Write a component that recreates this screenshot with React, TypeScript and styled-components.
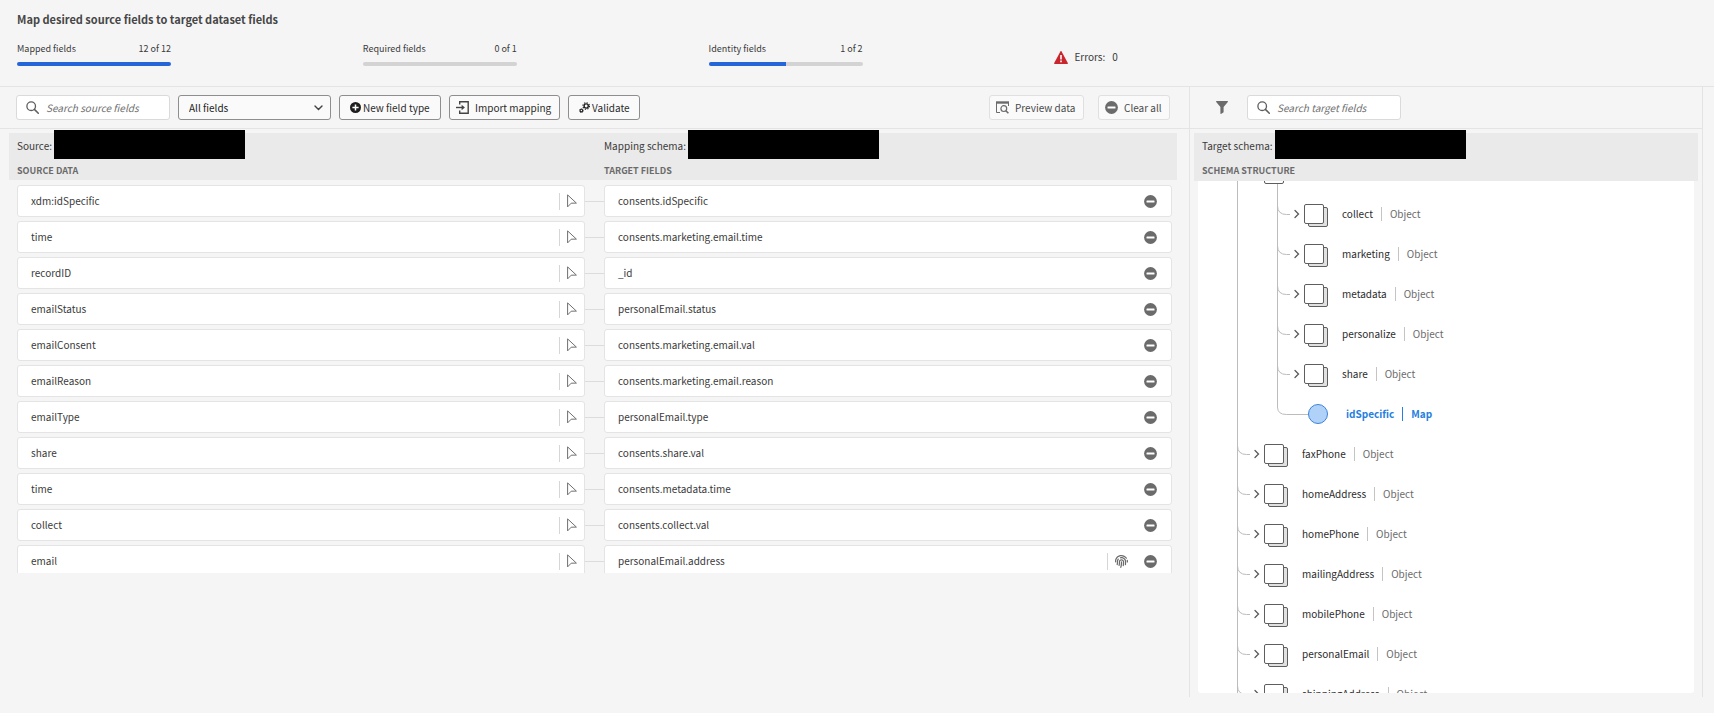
import React, { useLayoutEffect, useRef } from 'react';
import styled, { createGlobalStyle, css } from 'styled-components';
import { FaFingerprint } from 'react-icons/fa';

const GlobalStyle = createGlobalStyle`
  *, *::before, *::after { box-sizing: border-box; }
  body {
    margin: 0;
    background: #f5f5f5;
    color: #3a3a3a;
    font-family: "Noto Sans CJK SC", "Open Sans", sans-serif;
    font-size: 10px;
    line-height: 16px;
  }
  button, input, select { font: inherit; color: inherit; }
  ul { list-style: none; margin: 0; padding: 0; }
`;

const Page = styled.div`
  display: flex;
  flex-direction: column;
  height: 100vh;
  padding-bottom: 16px;
`;

const Header = styled.header`
  padding: 10px 0 20px 17px;
  border-bottom: 1px solid #e4e4e4;
`;

const Title = styled.h1`
  margin: 0;
  font-size: 11px;
  line-height: 18px;
  font-weight: 700;
  color: #464646;
`;

const Stats = styled.div`
  display: grid;
  grid-template-columns: repeat(5, 1fr);
  column-gap: 32px;
  margin-top: 12px;
`;

const Stat = styled.div`
  width: 154px;
`;

const StatLabels = styled.div`
  display: flex;
  justify-content: space-between;
  font-size: 9px;
  line-height: 18px;
  margin-bottom: 4px;
`;

const Track = styled.div`
  height: 4px;
  border-radius: 2px;
  background: #d3d3d3;
  overflow: hidden;
`;

const Fill = styled.div`
  height: 100%;
  background: #2466d8;
`;

const Errors = styled.div`
  display: flex;
  align-items: center;
  gap: 6px;
  padding-top: 8px;
`;

const ErrorCount = styled.span`
  margin-left: 1px;
`;

const Workspace = styled.main`
  flex: 1;
  min-height: 0;
  display: grid;
  grid-template-columns: minmax(0, 1189fr) minmax(0, 514fr) 11px;
`;

const Pane = styled.section<{ $divided?: boolean }>`
  display: flex;
  flex-direction: column;
  min-height: 0;
  ${p => p.$divided && css`
    border-left: 1px solid #e4e4e4;
    border-right: 1px solid #e4e4e4;
  `}
`;

const Toolbar = styled.div<{ $inset: number }>`
  display: flex;
  align-items: center;
  gap: 8px;
  padding: 8px 19px 8px ${p => p.$inset}px;
  border-bottom: 1px solid #e4e4e4;
`;

const Spacer = styled.div`
  flex: 1;
`;

const SearchField = styled.label`
  display: flex;
  align-items: center;
  gap: 7px;
  width: 154px;
  height: 25px;
  padding: 0 9px;
  background: #fff;
  border: 1px solid #dadada;
  border-radius: 3px;
`;

const SearchInput = styled.input`
  width: 100%;
  min-width: 0;
  padding: 0;
  border: 0;
  outline: 0;
  background: none;
  &::placeholder { color: #6f6f6f; font-style: italic; opacity: 1; }
`;

const SelectBox = styled.div`
  display: grid;
  align-items: center;
  width: 153px;
  height: 25px;
  > * { grid-area: 1 / 1; }
  > svg { justify-self: end; margin-right: 8px; pointer-events: none; }
`;

const Select = styled.select`
  appearance: none;
  width: 100%;
  height: 25px;
  padding: 0 24px 0 10px;
  color: #222;
  background: #fafafa;
  border: 1px solid #8e8e8e;
  border-radius: 3px;
`;

const Button = styled.button<{ $quiet?: boolean; $compact?: boolean; $width: number }>`
  display: flex;
  align-items: center;
  gap: ${p => (p.$compact ? 2 : 6)}px;
  min-width: ${p => p.$width}px;
  height: 25px;
  padding: 0 6px 0 ${p => (p.$compact ? 10 : 6)}px;
  white-space: nowrap;
  color: ${p => (p.$quiet ? '#4b4b4b' : '#2c2c2c')};
  background: #fafafa;
  border: 1px solid ${p => (p.$quiet ? '#e0e0e0' : '#8e8e8e')};
  border-radius: 3px;
`;

const ButtonPair = styled.div`
  display: flex;
  gap: 14px;
`;

const IconButton = styled.button`
  display: flex;
  align-items: center;
  justify-content: center;
  flex: none;
  padding: 0;
  border: 0;
  background: none;
`;

const FilterButton = styled(IconButton)`
  width: 12px;
  margin-right: 11px;
`;

const Band = styled.div<{ $wide?: boolean }>`
  display: grid;
  grid-template-columns: ${p => (p.$wide ? '1fr 1fr' : '1fr')};
  column-gap: 19px;
  margin: 4px ${p => (p.$wide ? 12 : 4)}px 0 ${p => (p.$wide ? 9 : 4)}px;
  height: ${p => (p.$wide ? 47 : 48)}px;
  padding: 0 5px 0 8px;
  background: #eaeaea;
`;

const SchemaLine = styled.div`
  display: flex;
  align-items: center;
  gap: 2px;
  height: 26px;
  white-space: nowrap;
`;

const Redacted = styled.span`
  width: 191px;
  height: 29px;
  margin-top: -3px;
  background: #000;
`;

const BandTitle = styled.h2`
  margin: 4px 0 0;
  font-size: 9px;
  line-height: 16px;
  font-weight: 700;
  color: #6b6b6b;
  text-transform: uppercase;
`;

const MappingList = styled.ul`
  height: calc(100vh - 320px);
  padding: 5px 17px 0;
  overflow: hidden;
`;

const MappingRow = styled.li`
  display: grid;
  grid-template-columns: minmax(0, 1fr) 19px minmax(0, 1fr);
  align-items: center;
  margin-bottom: 4px;
`;

const FieldCard = styled.div<{ $target?: boolean }>`
  display: flex;
  align-items: center;
  height: 32px;
  padding: 0 ${p => (p.$target ? 14 : 7)}px 0 13px;
  background: #fff;
  border: 1px solid #e4e4e4;
  border-radius: 3px;
`;

const FieldName = styled.span`
  flex: 1;
`;

const CardDivider = styled.span`
  width: 1px;
  height: 17px;
  margin-right: 7px;
  background: #d6d6d6;
`;

const Identity = styled.span`
  display: flex;
  align-items: center;
  margin-right: 16px;
  color: #6b6b6b;
`;

const Connector = styled.span`
  height: 1px;
  background: #dcdcdc;
`;

const TreePanel = styled.div`
  flex: 1;
  min-height: 0;
  margin: 0 8px 4px;
  background: #fff;
  border-radius: 0 0 3px 3px;
  overflow-y: auto;
  scrollbar-width: none;
`;

const TreeRow = styled.li`
  display: flex;
  align-items: center;
  height: 40px;
  padding-left: 39px;
  > svg { flex: none; }
`;

const NodeName = styled.span<{ $selected?: boolean }>`
  margin-left: ${p => (p.$selected ? 18 : 14)}px;
  font-weight: ${p => (p.$selected ? 700 : 400)};
  color: ${p => (p.$selected ? '#2680e0' : '#2c2c2c')};
`;

const NodeType = styled.span<{ $selected?: boolean }>`
  margin-left: 8px;
  padding-left: 8px;
  line-height: 14px;
  border-left: 1px solid ${p => (p.$selected ? '#2680e0' : '#c4c4c4')};
  font-weight: ${p => (p.$selected ? 700 : 400)};
  color: ${p => (p.$selected ? '#2680e0' : '#6b6b6b')};
`;

const GlassSvg = styled.svg`
  flex: none;
`;

const SearchIcon = () => (
  <GlassSvg width="13" height="13" viewBox="0 0 13 13" fill="none" stroke="#5e5e5e" strokeWidth="1.3">
    <circle cx="5.2" cy="5.2" r="4.3" />
    <path d="M8.4 8.4 12.3 12.3" strokeLinecap="round" strokeWidth="1.5" />
  </GlassSvg>
);

const ChevronDown = () => (
  <svg width="9" height="6" viewBox="0 0 9 6" fill="none" stroke="#444" strokeWidth="1.4" strokeLinecap="round">
    <path d="M1 1 4.5 4.6 8 1" />
  </svg>
);

const PlusCircle = () => (
  <svg width="11" height="11" viewBox="0 0 11 11">
    <circle cx="5.5" cy="5.5" r="5.5" fill="#1e1e1e" />
    <path d="M5.5 2.4v6.2M2.4 5.5h6.2" stroke="#fff" strokeWidth="1.5" />
  </svg>
);

const ImportIcon = () => (
  <svg width="13" height="13" viewBox="0 0 13 13" fill="none" stroke="#444" strokeWidth="1.4">
    <path d="M3.7 3.6V.8h8.5v11.4H3.7V9.4" />
    <path d="M0 6.5h7" />
    <path d="M5.6 3.7 8.9 6.5 5.6 9.3Z" fill="#444" stroke="none" />
  </svg>
);

const GearsIcon = () => (
  <svg width="11" height="11" viewBox="0 0 11 11" fill="none" stroke="#222">
    <circle cx="7.2" cy="4" r="2.1" strokeWidth="1.4" />
    <circle cx="7.2" cy="4" r="3.3" strokeWidth="1.1" strokeDasharray="1.3 1.29" />
    <circle cx="2.4" cy="8.6" r="1.3" strokeWidth="1.1" />
    <circle cx="2.4" cy="8.6" r="2" strokeWidth=".7" strokeDasharray=".9 .67" />
  </svg>
);

const PreviewIcon = () => (
  <svg width="13" height="13" viewBox="0 0 13 13" fill="none" stroke="#6b6b6b">
    <path d="M.5 1v10.500H4M12.500 1v4" />
    <path d="M0 1.5h13" strokeWidth="2.4" />
    <circle cx="7.8" cy="7.6" r="2.9" strokeWidth="1.2" />
    <path d="M9.9 9.8 12.4 12.3" strokeWidth="1.6" />
  </svg>
);

const MinusCircle = () => (
  <svg width="13" height="13" viewBox="0 0 13 13">
    <circle cx="6.5" cy="6.5" r="6.4" fill="#6b6b6b" />
    <rect x="2.5" y="5.5" width="8" height="2" rx=".5" fill="#fff" />
  </svg>
);

const FilterIcon = () => (
  <svg width="12" height="13" viewBox="0 0 12 13">
    <path d="M.4 0h11.2q.6.4.2 1L7.6 6v5.2L5 12.9q-.5.1-.6-.4V6L.2 1Q-.1.3.4 0Z" fill="#6b6b6b" />
  </svg>
);

const PointerIcon = () => (
  <svg width="10" height="14" viewBox="0 0 10 14" fill="none" stroke="#6f6f6f" strokeLinejoin="round">
    <path d="M.6.9v12L4.2 9.2l5.2-.1Z" />
  </svg>
);

const AlertIcon = () => (
  <svg width="14" height="13" viewBox="0 0 14 13">
    <path d="M6.4.5q.6-1 1.2 0l6.2 11.6q.4.9-.5.9H.7q-.9 0-.5-.9Z" fill="#c9252d" />
    <path d="M7 4v4.4M7 9.6v1.6" stroke="#fff" strokeWidth="1.6" />
  </svg>
);

const Trunk = () => (
  <svg width="40" height="40" viewBox="0 0 40 40" fill="none">
    <path d="M.5 0v40" stroke="#bcbcbc" />
  </svg>
);

/* Branch line with its elbow; the last child of a group ends at the elbow. */
const Branch = ({ last }: { last?: boolean }) =>
  last ? (
    <svg width="31" height="40" viewBox="0 0 31 40" fill="none" stroke="#bcbcbc">
      <path d="M.5 0v13q0 7.500 9 7.500H31" />
    </svg>
  ) : (
    <svg width="13" height="40" viewBox="0 0 13 40" fill="none" stroke="#bcbcbc">
      <path d="M.5 0v40" />
      <path d="M.5 11.500q0 9 9 9H13" />
    </svg>
  );

const Caret = ({ open }: { open?: boolean }) => (
  <svg width="14" height="10" viewBox="0 0 14 10" fill="none" stroke="#5a5a5a" strokeWidth="1.3" strokeLinecap="round">
    <path d={open ? 'M3 3.500 6.500 7 10 3.500' : 'M5 1.500 8.500 5 5 8.500'} />
  </svg>
);

const ObjectIcon = ({ open }: { open?: boolean }) => (
  <svg width="24" height="40" viewBox="0 0 24 40" stroke="#5e5e5e">
    {!open && <rect x="4.500" y="13.500" width="19" height="19" rx="1.500" fill="#e1e1e1" />}
    <rect x=".5" y="10.500" width="19" height="19" rx="1.500" fill="#fff" />
    {open && <path d="M13.500 30v10" stroke="#bcbcbc" />}
  </svg>
);

const MapIcon = () => (
  <svg width="20" height="20" viewBox="0 0 20 20">
    <circle cx="10" cy="10" r="9.500" fill="#b1d2f8" stroke="#3b83d8" />
  </svg>
);

const stats = [
  { label: 'Mapped fields', value: 12, total: 12 },
  { label: 'Required fields', value: 0, total: 1 },
  { label: 'Identity fields', value: 1, total: 2 },
];

const mappings = [
  { source: 'xdm:idSpecific', target: 'consents.idSpecific' },
  { source: 'time', target: 'consents.marketing.email.time' },
  { source: 'recordID', target: '_id' },
  { source: 'emailStatus', target: 'personalEmail.status' },
  { source: 'emailConsent', target: 'consents.marketing.email.val' },
  { source: 'emailReason', target: 'consents.marketing.email.reason' },
  { source: 'emailType', target: 'personalEmail.type' },
  { source: 'share', target: 'consents.share.val' },
  { source: 'time', target: 'consents.metadata.time' },
  { source: 'collect', target: 'consents.collect.val' },
  { source: 'email', target: 'personalEmail.address', identity: true },
];

type TreeNode = { name: string; depth: 1 | 2; open?: boolean; selected?: boolean };

const tree: TreeNode[] = [
  { name: 'consents', depth: 1, open: true },
  { name: 'collect', depth: 2 },
  { name: 'marketing', depth: 2 },
  { name: 'metadata', depth: 2 },
  { name: 'personalize', depth: 2 },
  { name: 'share', depth: 2 },
  { name: 'idSpecific', depth: 2, selected: true },
  { name: 'faxPhone', depth: 1 },
  { name: 'homeAddress', depth: 1 },
  { name: 'homePhone', depth: 1 },
  { name: 'mailingAddress', depth: 1 },
  { name: 'mobilePhone', depth: 1 },
  { name: 'personalEmail', depth: 1 },
  { name: 'shippingAddress', depth: 1 },
];

const SCROLL_START = 27;

const SchemaTree = () => {
  const panel = useRef<HTMLDivElement>(null);
  useLayoutEffect(() => {
    if (panel.current) panel.current.scrollTop = SCROLL_START;
  }, []);
  return (
    <TreePanel ref={panel}>
      <ul>
        {tree.map(node => (
          <TreeRow key={node.name}>
            {node.depth === 2 && <Trunk />}
            <Branch last={node.selected} />
            {node.selected ? (
              <MapIcon />
            ) : (
              <>
                <Caret open={node.open} />
                <ObjectIcon open={node.open} />
              </>
            )}
            <NodeName $selected={node.selected}>{node.name}</NodeName>
            <NodeType $selected={node.selected}>{node.selected ? 'Map' : 'Object'}</NodeType>
          </TreeRow>
        ))}
      </ul>
    </TreePanel>
  );
};

const HeadingCell = ({ label, title }: { label: string; title: string }) => (
  <div>
    <SchemaLine>
      {label}
      <Redacted />
    </SchemaLine>
    <BandTitle>{title}</BandTitle>
  </div>
);

export default function App() {
  return (
    <Page>
      <GlobalStyle />
      <Header>
        <Title>Map desired source fields to target dataset fields</Title>
        <Stats>
          {stats.map(s => (
            <Stat key={s.label}>
              <StatLabels>
                <span>{s.label}</span>
                <span>{`${s.value} of ${s.total}`}</span>
              </StatLabels>
              <Track>
                <Fill style={{ width: `${(100 * s.value) / s.total}%` }} />
              </Track>
            </Stat>
          ))}
          <Errors>
            <AlertIcon />
            <span>Errors:</span>
            <ErrorCount>0</ErrorCount>
          </Errors>
        </Stats>
      </Header>
      <Workspace>
        <Pane>
          <Toolbar $inset={16}>
            <SearchField>
              <SearchIcon />
              <SearchInput aria-label="Search source fields" placeholder="Search source fields" />
            </SearchField>
            <SelectBox>
              <Select aria-label="Field filter">
                <option>All fields</option>
              </Select>
              <ChevronDown />
            </SelectBox>
            <Button $width={102} $compact><PlusCircle />New field type</Button>
            <Button $width={111}><ImportIcon />Import mapping</Button>
            <Button $width={72} $compact><GearsIcon />Validate</Button>
            <Spacer />
            <ButtonPair>
              <Button $quiet $width={95}><PreviewIcon />Preview data</Button>
              <Button $quiet $width={72}><MinusCircle />Clear all</Button>
            </ButtonPair>
          </Toolbar>
          <Band $wide>
            <HeadingCell label="Source:" title="Source data" />
            <HeadingCell label="Mapping schema:" title="Target fields" />
          </Band>
          <MappingList>
            {mappings.map(m => (
              <MappingRow key={m.target}>
                <FieldCard>
                  <FieldName>{m.source}</FieldName>
                  <CardDivider />
                  <IconButton aria-label={`Select source for ${m.target}`}><PointerIcon /></IconButton>
                </FieldCard>
                <Connector />
                <FieldCard $target>
                  <FieldName>{m.target}</FieldName>
                  {m.identity && (
                    <Identity>
                      <CardDivider />
                      <FaFingerprint size={13} />
                    </Identity>
                  )}
                  <IconButton aria-label={`Remove ${m.target}`}><MinusCircle /></IconButton>
                </FieldCard>
              </MappingRow>
            ))}
          </MappingList>
        </Pane>
        <Pane $divided>
          <Toolbar $inset={26}>
            <FilterButton aria-label="Filter"><FilterIcon /></FilterButton>
            <SearchField>
              <SearchIcon />
              <SearchInput aria-label="Search target fields" placeholder="Search target fields" />
            </SearchField>
          </Toolbar>
          <Band>
            <HeadingCell label="Target schema:" title="Schema structure" />
          </Band>
          <SchemaTree />
        </Pane>
      </Workspace>
    </Page>
  );
}
